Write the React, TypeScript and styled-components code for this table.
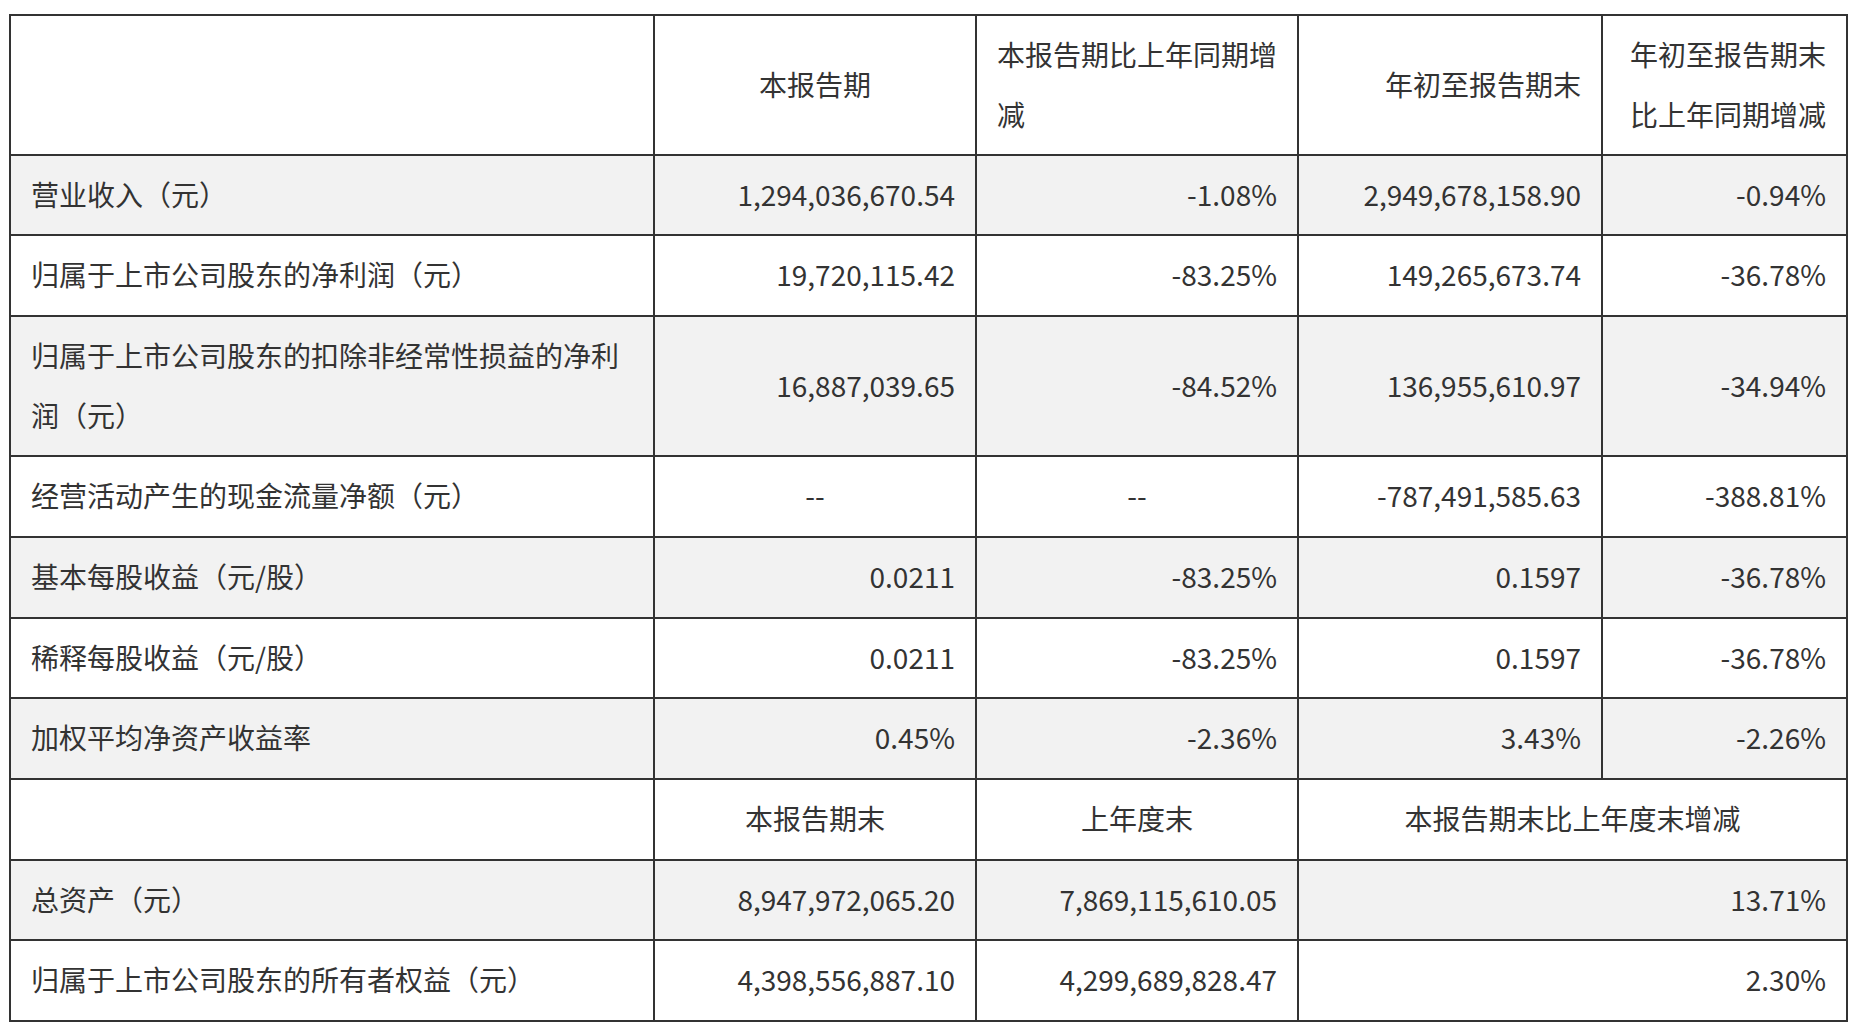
import React from "react";
import styled, { createGlobalStyle } from "styled-components";

const GlobalStyle = createGlobalStyle`
  html, body {
    margin: 0;
    padding: 0;
    background: #ffffff;
  }
  body {
    font-family: "Noto Sans CJK SC", "Noto Sans", sans-serif;
    color: #333333;
  }
`;

const Page = styled.div`
  padding: 14px 0 0 9px;
`;

const Grid = styled.div`
  display: grid;
  width: 1839px;
  box-sizing: border-box;
  grid-template-columns: 644px 322px 322px 304px 245px;
  grid-template-rows: 140px 80px 81px 140px 81px 81px 80px 81px 81px 80px 81px;
  border-top: 2px solid #333333;
  border-left: 2px solid #333333;
`;

type Align = "left" | "center" | "right";

const Cell = styled.div<{ $align?: Align; $shade?: boolean; $span?: number }>`
  box-sizing: border-box;
  display: flex;
  align-items: center;
  justify-content: ${(p) =>
    p.$align === "center" ? "center" : p.$align === "right" ? "flex-end" : "flex-start"};
  text-align: ${(p) => p.$align || "left"};
  grid-column: ${(p) => (p.$span ? `span ${p.$span}` : "auto")};
  padding: 0 20px 3px 20px;
  border-right: 2px solid #333333;
  border-bottom: 2px solid #333333;
  background: ${(p) => (p.$shade ? "#f2f2f2" : "#ffffff")};
  font-size: 28px;
  line-height: 60px;
  color: #333333;
  overflow: hidden;
`;

const Text = styled.span`
  display: block;
`;

type Row = {
  label: string;
  values: string[];
};

const topRows: Row[] = [
  { label: "营业收入（元）", values: ["1,294,036,670.54", "-1.08%", "2,949,678,158.90", "-0.94%"] },
  { label: "归属于上市公司股东的净利润（元）", values: ["19,720,115.42", "-83.25%", "149,265,673.74", "-36.78%"] },
  { label: "归属于上市公司股东的扣除非经常性损益的净利润（元）", values: ["16,887,039.65", "-84.52%", "136,955,610.97", "-34.94%"] },
  { label: "经营活动产生的现金流量净额（元）", values: ["--", "--", "-787,491,585.63", "-388.81%"] },
  { label: "基本每股收益（元/股）", values: ["0.0211", "-83.25%", "0.1597", "-36.78%"] },
  { label: "稀释每股收益（元/股）", values: ["0.0211", "-83.25%", "0.1597", "-36.78%"] },
  { label: "加权平均净资产收益率", values: ["0.45%", "-2.36%", "3.43%", "-2.26%"] },
];

const bottomRows: Row[] = [
  { label: "总资产（元）", values: ["8,947,972,065.20", "7,869,115,610.05", "13.71%"] },
  { label: "归属于上市公司股东的所有者权益（元）", values: ["4,398,556,887.10", "4,299,689,828.47", "2.30%"] },
];

export default function App() {
  return (
    <>
      <GlobalStyle />
      <Page>
        <Grid>
          <Cell />
          <Cell $align="center">本报告期</Cell>
          <Cell $align="left">
            <Text>本报告期比上年同期增减</Text>
          </Cell>
          <Cell $align="right">年初至报告期末</Cell>
          <Cell $align="right">
            <Text>年初至报告期末比上年同期增减</Text>
          </Cell>

          {topRows.map((r, i) => {
            const shade = i % 2 === 0;
            return (
              <React.Fragment key={r.label}>
                <Cell $shade={shade}>
                  <Text>{r.label}</Text>
                </Cell>
                {r.values.map((v, j) => (
                  <Cell key={j} $shade={shade} $align={v === "--" ? "center" : "right"}>
                    {v}
                  </Cell>
                ))}
              </React.Fragment>
            );
          })}

          <Cell />
          <Cell $align="center">本报告期末</Cell>
          <Cell $align="center">上年度末</Cell>
          <Cell $align="center" $span={2}>
            本报告期末比上年度末增减
          </Cell>

          {bottomRows.map((r, i) => {
            const shade = i % 2 === 0;
            return (
              <React.Fragment key={r.label}>
                <Cell $shade={shade}>
                  <Text>{r.label}</Text>
                </Cell>
                <Cell $shade={shade} $align="right">{r.values[0]}</Cell>
                <Cell $shade={shade} $align="right">{r.values[1]}</Cell>
                <Cell $shade={shade} $align="right" $span={2}>
                  {r.values[2]}
                </Cell>
              </React.Fragment>
            );
          })}
        </Grid>
      </Page>
    </>
  );
}
